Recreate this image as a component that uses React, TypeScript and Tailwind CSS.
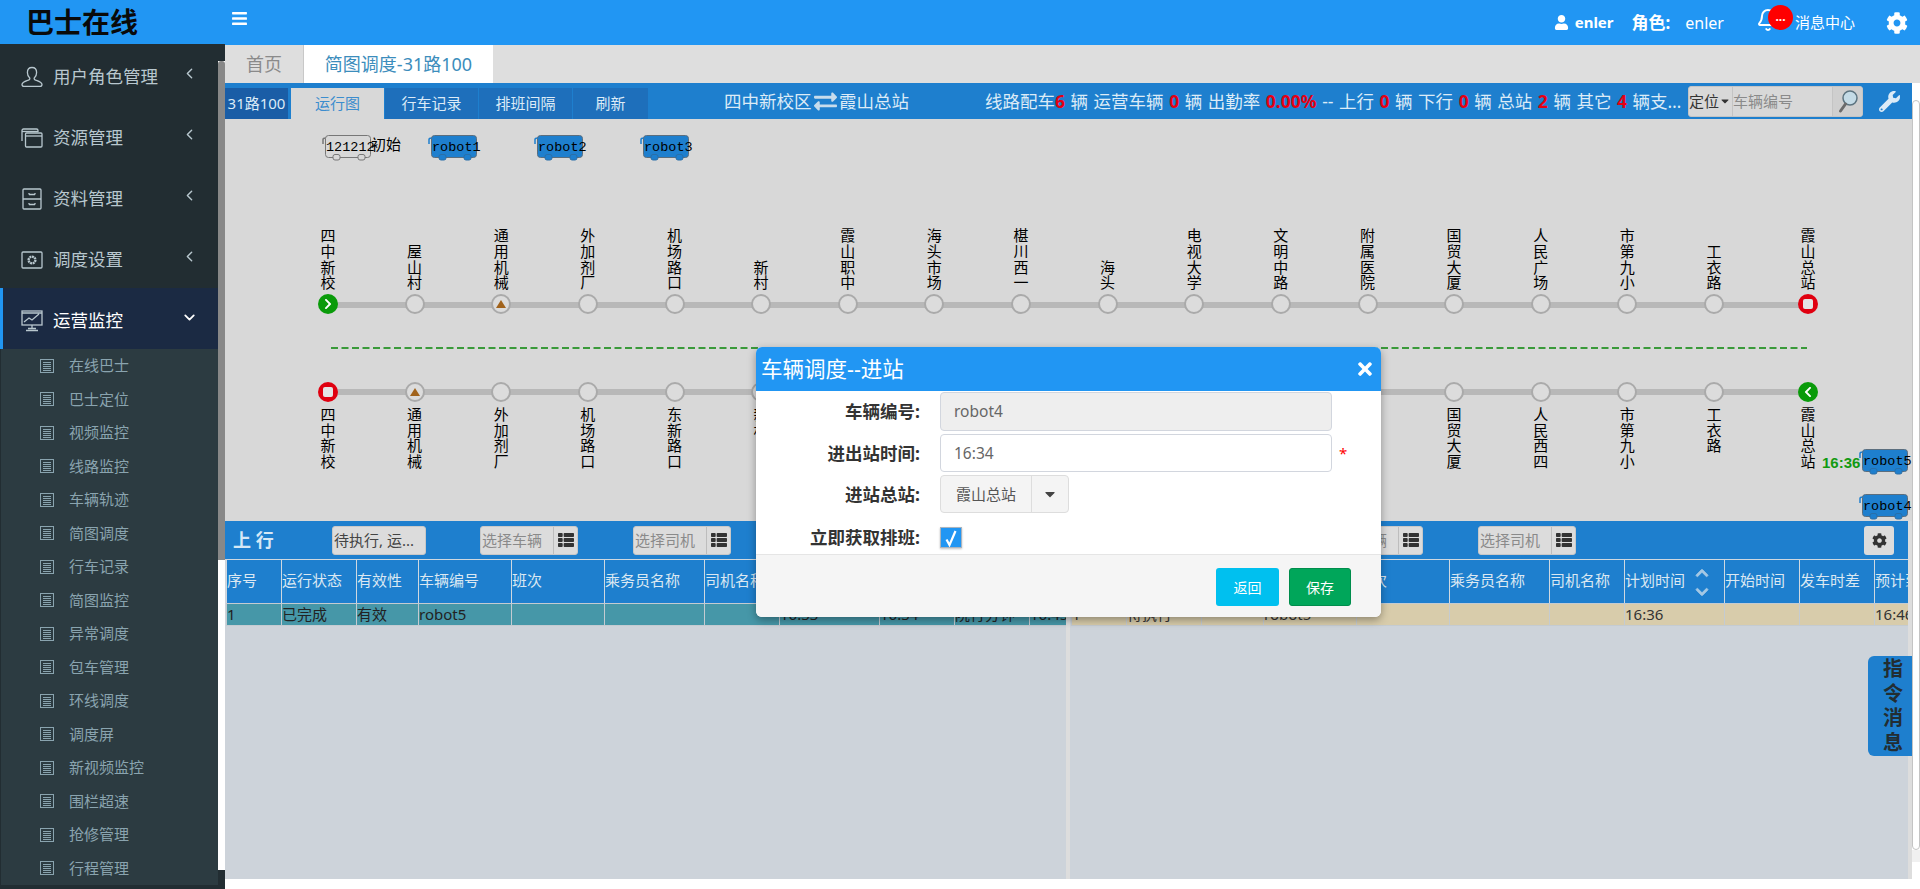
import React from "react";
import {
  FaBars,
  FaCaretDown,
  FaChevronDown,
  FaChevronLeft,
  FaChevronRight,
  FaChevronUp,
  FaCog,
  FaExchangeAlt,
  FaThList,
  FaTimes,
  FaUser,
  FaWrench,
} from "react-icons/fa";
import { Bell, ChevronDown, ChevronLeft } from "lucide-react";

const subMenu = [
  "在线巴士",
  "巴士定位",
  "视频监控",
  "线路监控",
  "车辆轨迹",
  "简图调度",
  "行车记录",
  "简图监控",
  "异常调度",
  "包车管理",
  "环线调度",
  "调度屏",
  "新视频监控",
  "围栏超速",
  "抢修管理",
  "行程管理",
];

const upStations = [
  "四中新校",
  "屋山村",
  "通用机械",
  "外加剂厂",
  "机场路口",
  "新村",
  "霞山职中",
  "海头市场",
  "椹川西一",
  "海头",
  "电视大学",
  "文明中路",
  "附属医院",
  "国贸大厦",
  "人民广场",
  "市第九小",
  "工衣路",
  "霞山总站",
];

// index is the slot on the line, the middle ones sit behind the dialog
const downStations = [
  { name: "四中新校", slot: 0, kind: "stop" },
  { name: "通用机械", slot: 1, kind: "bus" },
  { name: "外加剂厂", slot: 2 },
  { name: "机场路口", slot: 3 },
  { name: "东新路口", slot: 4 },
  { name: "新村", slot: 5 },
  { name: "国贸大厦", slot: 13 },
  { name: "人民西四", slot: 14 },
  { name: "市第九小", slot: 15 },
  { name: "工衣路", slot: 16 },
  { name: "霞山总站", slot: 17, kind: "left" },
];

const columns = ["序号", "运行状态", "有效性", "车辆编号", "班次", "乘务员名称", "司机名称", "计划时间", "开始时间", "发车时差", "预计到达"];

const slotX = (slot: number) => (slot === 17 ? 1583 : 103 + slot * 86.625);

function UserIcon() {
  return (
    <svg width="22" height="22" viewBox="0 0 22 22" fill="none" stroke="currentColor" strokeWidth="1.3">
      <path d="M11 1.5c3 0 4.6 2.3 4.6 5 0 2.4-1 4.4-2.3 5.4-.4.8 0 1.6 1.3 2.2 2.8 1 6.4 2 6.4 4.4 0 1.2-1 1.9-2.2 1.9H3.2C2 20.400 1 19.700 1 18.500c0-2.400 3.600-3.400 6.400-4.400 1.300-.6 1.700-1.400 1.300-2.200C7.400 10.900 6.400 8.900 6.400 6.500c0-2.700 1.600-5 4.600-5z" />
    </svg>
  );
}

function WindowsIcon() {
  return (
    <svg width="22" height="20" viewBox="0 0 22 20" fill="none" stroke="currentColor" strokeWidth="1.3">
      <path d="M1 13V2.500C1 1.700 1.700 1 2.500 1h13c.8 0 1.500.7 1.500 1.500V4" />
      <path d="M1 3.500h16" />
      <rect x="4.500" y="5" width="16.500" height="14" rx="1" />
      <path d="M4.500 8h16.500" />
    </svg>
  );
}

function DrawerIcon() {
  return (
    <svg width="20" height="22" viewBox="0 0 20 22" fill="none" stroke="currentColor" strokeWidth="1.3">
      <rect x="1" y="1" width="18" height="20" rx="1" />
      <path d="M1 11h18M7 6.500h6M7 16.500h6M7 5v1.500M13 5v1.500M7 15v1.500M13 15v1.500" />
    </svg>
  );
}

function PhotoIcon() {
  return (
    <svg width="22" height="18" viewBox="0 0 22 18" fill="none" stroke="currentColor" strokeWidth="1.3">
      <rect x="1" y="1" width="20" height="16" rx="1" />
      <circle cx="11" cy="9" r="3.400" strokeWidth="2.400" strokeDasharray="2 .6" />
    </svg>
  );
}

function MonitorIcon() {
  return (
    <svg width="22" height="22" viewBox="0 0 22 22" fill="none" stroke="currentColor" strokeWidth="1.3">
      <rect x="1" y="1" width="20" height="14" />
      <path d="M3 12l5-4 3 2 7-6M1 3h20" />
      <path d="M11 15v3M5 20.500h12M7 18.500h8" />
    </svg>
  );
}

function ListIcon() {
  return (
    <svg width="14" height="14" viewBox="0 0 14 14" fill="none" stroke="currentColor" strokeWidth="1">
      <rect x=".5" y=".5" width="13" height="13" />
      <path d="M3 3.500h8M3 5.500h8M3 7.500h8M3 9.500h8M3 11.500h8" />
    </svg>
  );
}

function MagnifierIcon() {
  return (
    <svg width="24" height="26" viewBox="0 0 24 26" fill="none">
      <circle cx="14" cy="10" r="7" fill="#c4dbe6" stroke="#5d7480" strokeWidth="1.500" />
      <path d="M9.500 16l-5 7" stroke="#6b6b6b" strokeWidth="3" strokeLinecap="round" />
    </svg>
  );
}

function Bus({ x, y, label, plain }: { x: number; y: number; label: string; plain?: boolean }) {
  const fill = plain ? "#d8d8d8" : "#1e7fce";
  const line = plain ? "#777777" : "#1e7fce";
  return (
    <div className="absolute h-[26px] w-[52px]" style={{ left: x, top: y }}>
      <svg className="absolute left-0 top-0" width="52" height="26" viewBox="0 0 52 26">
        <path d="M1 9V4.500C1 3.500 2 3 4 3" fill="none" stroke={line} strokeWidth="1.500" />
        <rect x="3.500" y=".5" width="45" height="22" rx="3" fill={fill} stroke={plain ? "#777777" : "#5b6e7e"} strokeWidth="1" />
        <rect x="11" y="19.500" width="7" height="5.500" rx="2" fill={fill} stroke={plain ? "#777777" : "#2a6fa8"} />
        <rect x="36" y="19.500" width="7" height="5.500" rx="2" fill={fill} stroke={plain ? "#777777" : "#2a6fa8"} />
      </svg>
      <span className="absolute left-[4px] top-[5px] whitespace-nowrap text-[13.500px] leading-[16px] text-black [font-family:'Liberation_Mono',monospace]">
        {label}
      </span>
    </div>
  );
}

function Dot({ kind }: { kind?: string }) {
  if (kind === "right" || kind === "left") {
    return (
      <div className="flex h-5 w-5 items-center justify-center rounded-full bg-[#0a9b0a] text-white">
        {kind === "right" ? <FaChevronRight size={12} /> : <FaChevronLeft size={12} />}
      </div>
    );
  }
  if (kind === "stop") {
    return (
      <div className="flex h-5 w-5 items-center justify-center rounded-full bg-[#e00010]">
        <div className="h-[10px] w-[10px] rounded-[2px] bg-[#e4e4e4]" />
      </div>
    );
  }
  return (
    <div className="flex h-5 w-5 items-center justify-center rounded-full border-2 border-[#aaaaaa] bg-[#dcdcdc]">
      {kind === "bus" && <div className="h-0 w-0 border-x-[5px] border-b-[8px] border-x-transparent border-b-[#a1631c]" />}
    </div>
  );
}

function Station({ name, x, kind, below }: { name: string; x: number; kind?: string; below?: boolean }) {
  return (
    <div className={`absolute flex w-5 flex-col items-center ${below ? "top-[263px]" : "top-[109px]"}`} style={{ left: x - 10 }}>
      {below && <Dot kind={kind} />}
      <div className={`flex flex-col items-center text-[15px] leading-[15.700px] text-black ${below ? "mt-[5px]" : "mb-[3px] h-[63px] justify-end"}`}>
        {name.split("").map((c, i) => (
          <span key={i}>{c}</span>
        ))}
      </div>
      {!below && <Dot kind={kind} />}
    </div>
  );
}

function PickInput({ label, className }: { label: string; className: string }) {
  return (
    <div className={`flex h-[29px] w-[98px] overflow-hidden rounded-[3px] border border-[#c8c8c8] bg-[#dcdcdc] ${className}`}>
      <div className="flex-1 overflow-hidden whitespace-nowrap pl-[1px] text-[15px] leading-[27px] text-[#8a8a8a]">{label}</div>
      <div className="flex w-[24px] items-center justify-center border-l border-[#bdbdbd] text-[#333333]">
        <FaThList size={16} />
      </div>
    </div>
  );
}

function Panel({ title, rowClass, cells, hasGear, className }: { title: string; rowClass: string; cells: string[]; hasGear?: boolean; className: string }) {
  return (
    <div className={`flex h-full flex-col overflow-hidden ${className}`}>
      <div className="flex h-[38px] shrink-0 items-center bg-[#1e7fce]">
        <div className="ml-[8px] w-[99px] text-[18px] font-bold text-[#d6e8f6]">{title}</div>
        <div className="h-[29px] w-[94px] truncate rounded-[3px] border border-[#c8c8c8] bg-[#dcdcdc] pl-[1px] text-[15px] leading-[27px] text-[#444444]">
          待执行, 运...
        </div>
        <PickInput label="选择车辆" className="ml-[54px]" />
        <PickInput label="选择司机" className="ml-[55px]" />
        {hasGear && (
          <div className="ml-[288px] flex h-[29px] w-[30px] items-center justify-center rounded-[3px] bg-[#dcdcdc] text-[#333333]">
            <FaCog size={15} />
          </div>
        )}
      </div>
      <div className="pl-px">
        <div className="grid w-[1000px] grid-cols-[55px_75px_62px_93px_93px_100px_75px_100px_75px_75px_100px] border-t border-[#cfd8e0] bg-[#1e7fce]">
          {columns.map((c) => (
            <div key={c} className="relative flex h-[43px] items-center overflow-hidden whitespace-nowrap border-l border-[#cfd8e0] pb-[2px] text-[15px] text-[#dbe8f2]">
              {c}
              {c === "计划时间" && (
                <span className="absolute right-[15px] top-[6px] flex flex-col gap-[5px] text-[#a5c8e4]">
                  <FaChevronUp size={14} stroke="currentColor" strokeWidth={30} />
                  <FaChevronDown size={14} stroke="currentColor" strokeWidth={30} />
                </span>
              )}
            </div>
          ))}
        </div>
        <div className={`grid w-[1000px] grid-cols-[55px_75px_62px_93px_93px_100px_75px_100px_75px_75px_100px] border-y border-[#c4cbd1] ${rowClass}`}>
          {cells.map((c, i) => (
            <div key={i} className="h-[21px] overflow-hidden whitespace-nowrap border-l border-[#c4cbd1] text-[15px] leading-[21px]">
              {c}
            </div>
          ))}
        </div>
      </div>
    </div>
  );
}

function FormRow({ label, className, children }: { label: string; className: string; children: React.ReactNode }) {
  return (
    <div className={`flex items-center ${className}`}>
      <div className="w-[164px] whitespace-nowrap text-right text-[17.500px] font-bold text-[#333333]">{label}</div>
      <div className="ml-[20px] flex items-center">{children}</div>
    </div>
  );
}

export default function App() {
  return (
    <div className="relative flex h-[889px] w-[1920px] overflow-hidden bg-white [font-family:'Noto_Sans','Noto_Sans_CJK_SC',sans-serif]">
      {/* Sidebar */}
      <aside className="flex w-[225px] shrink-0 flex-col">
        <div className="flex h-[44px] shrink-0 items-center bg-[#2196f3] pl-[26px] text-[28px] font-bold text-[#0a0a0a]">巴士在线</div>
        <div className="flex min-h-0 flex-1">
          <nav className="w-[218px] overflow-hidden bg-[#222d32]">
            {[
              { label: "用户角色管理", icon: <UserIcon /> },
              { label: "资源管理", icon: <WindowsIcon /> },
              { label: "资料管理", icon: <DrawerIcon /> },
              { label: "调度设置", icon: <PhotoIcon /> },
            ].map((m) => (
              <div key={m.label} className="flex h-[61px] items-center pt-[4px] text-[#b8c7ce]">
                <div className="flex w-[53px] justify-center pl-[18px] pr-[7px]">{m.icon}</div>
                <span className="w-[128px] text-[17.500px]">{m.label}</span>
                <ChevronLeft size={17} strokeWidth={2} className="mb-[6px]" />
              </div>
            ))}
            <div className="flex h-[61px] items-center border-l-[3px] border-[#2196f3] bg-[#1b2a43] pt-[4px] text-white">
              <div className="flex w-[50px] justify-center pl-[15px] pr-[7px] text-[#b8c7ce]">
                <MonitorIcon />
              </div>
              <span className="w-[128px] text-[17.500px]">运营监控</span>
              <ChevronDown size={17} strokeWidth={2.500} className="mb-[6px]" />
            </div>
            <div className="bg-[#2c3b41]">
              {subMenu.map((s) => (
                <div key={s} className="flex h-[33.500px] items-center border-l border-[#222d32] pl-[39px] text-[15px] text-[#8aa4af]">
                  <ListIcon />
                  <span className="mb-px ml-[15px]">{s}</span>
                </div>
              ))}
            </div>
          </nav>
          <div className="flex w-[7px] flex-col">
            <div className="h-[17px] bg-[#222d32]" />
            <div className="h-[499px] rounded-t-[3px] bg-[#888888]" />
            <div className="h-[310px] bg-white" />
            <div className="flex-1 bg-[#222d32]" />
          </div>
        </div>
      </aside>

      {/* Main */}
      <div className="flex min-w-0 flex-1 flex-col">
        <header className="flex h-[45px] shrink-0 items-center bg-[#2196f3] text-white">
          <FaBars size={17} className="ml-[6px] mb-[9px]" />
          <div className="ml-auto flex items-center text-[15px]">
            <FaUser size={15} />
            <span className="ml-[6px] font-bold">enler</span>
            <span className="ml-[18px] text-[17px] font-bold">角色:</span>
            <span className="ml-[15px] text-[16px]">enler</span>
            <div className="relative ml-[32px] flex w-[54px]">
              <Bell size={24} className="-mt-[6px]" />
              <span className="absolute left-[12px] top-[-9px] flex h-[25px] w-[25px] items-center justify-center rounded-full bg-[#ff0000] text-[12px] font-bold">...</span>
            </div>
            <span className="ml-[-15px] text-[15px]">消息中心</span>
            <FaCog size={22} className="ml-[31px] mr-[12px]" />
          </div>
        </header>

        <div className="flex h-[38px] shrink-0 bg-[#dedede] text-[18px]">
          <div className="flex w-[79px] items-center justify-center border-r border-[#c8c8c8] text-[#8a8a8a]">首页</div>
          <div className="flex w-[189px] items-center justify-center bg-white text-[#3c8dbc]">简图调度-31路100</div>
        </div>

        <div className="flex min-h-0 flex-1">
          <div className="flex w-[1687px] shrink-0 flex-col">
            {/* Line toolbar */}
            <div className="flex h-[36px] shrink-0 items-end bg-[#1e7fce] text-white">
              <div className="flex h-[31px] w-[63px] items-center justify-center bg-[#1a5da6] text-[15px] text-[#dcebf7]">31路100</div>
              <div className="ml-[3px] flex h-[31px] w-[93px] items-center justify-center bg-[#d8d8d8] text-[15px] text-[#3c8dce]">运行图</div>
              {["行车记录", "排班间隔"].map((t) => (
                <div key={t} className="ml-px flex h-[31px] w-[93px] items-center justify-center bg-[#1e6fbb] text-[15px] text-[#dcebf7]">
                  {t}
                </div>
              ))}
              <div className="ml-px flex h-[31px] w-[75px] items-center justify-center bg-[#1e6fbb] text-[15px] text-[#dcebf7]">刷新</div>
              <div className="flex h-[36px] items-center whitespace-nowrap text-[17.500px] text-[#dcebf7]">
                <div className="ml-[76px] flex w-[185px] items-center justify-between">
                  四中新校区
                  <FaExchangeAlt size={23} className="text-[#c7dcec]" />
                  霞山总站
                </div>
                <div className="ml-[76px] w-[702px] overflow-hidden text-ellipsis [word-spacing:1px]">
                  线路配车<b className="text-[#e60012]">6</b> 辆 运营车辆 <b className="text-[#e60012]">0</b> 辆 出勤率 <b className="text-[#e60012]">0.00%</b> -- 上行 <b className="text-[#e60012]">0</b> 辆 下行 <b className="text-[#e60012]">0</b> 辆 总站 <b className="text-[#e60012]">2</b> 辆 其它 <b className="text-[#e60012]">4</b> 辆支援 0 辆
                </div>
                <div className="ml-px flex h-[31px] w-[175px] overflow-hidden rounded-[3px] border border-[#c4c4c4] bg-[#d8d8d8] text-[15px]">
                  <div className="flex w-[44px] items-center border-r border-[#c4c4c4] text-[#333333]">
                    定位
                    <FaCaretDown size={12} />
                  </div>
                  <div className="flex w-[99px] items-center text-[#8a8a8a]">车辆编号</div>
                  <div className="flex flex-1 items-center justify-center border-l border-[#c4c4c4] bg-[#cfcfcf]">
                    <MagnifierIcon />
                  </div>
                </div>
                <FaWrench size={21} className="ml-[16px] text-[#dcebf7]" />
              </div>
            </div>

            {/* Route diagram */}
            <div className="relative h-[402px] shrink-0 overflow-hidden bg-[#d8d8d8]">
              <Bus x={97} y={16} label="121212" plain />
              <span className="absolute left-[146px] top-[14px] text-[15px] text-black">初始</span>
              <Bus x={203} y={16} label="robot1" />
              <Bus x={309} y={16} label="robot2" />
              <Bus x={415} y={16} label="robot3" />

              <div className="absolute left-[103px] top-[183px] h-[6px] w-[1480px] bg-[#b8b8b8]" />
              {upStations.map((s, i) => (
                <Station key={s} name={s} x={slotX(i)} kind={i === 0 ? "right" : i === 2 ? "bus" : i === 17 ? "stop" : undefined} />
              ))}

              <svg className="absolute left-[106px] top-[228px]" width="1476" height="2">
                <line x1="0" y1="1" x2="1476" y2="1" stroke="#3a9a3a" strokeWidth="2" strokeDasharray="7 3.500" />
              </svg>

              <div className="absolute left-[103px] top-[270px] h-[6px] w-[1480px] bg-[#b8b8b8]" />
              {downStations.map((s) => (
                <Station key={s.name} name={s.name} x={slotX(s.slot)} kind={s.kind} below />
              ))}

              <span className="absolute left-[1597px] top-[333px] text-[15px] font-bold text-[#129a12] [font-family:'Liberation_Sans',sans-serif]">16:36</span>
              <Bus x={1634} y={330} label="robot5" />
              <Bus x={1634} y={375} label="robot4" />
            </div>

            {/* Up / down tables */}
            <div className="flex h-[358px] shrink-0 bg-[#cdd3da]">
              <Panel
                title="上 行"
                className="w-[841px] shrink-0"
                rowClass="bg-[#4697a8] text-[#222222]"
                cells={["1", "已完成", "有效", "robot5", "", "", "", "16:33", "16:34", "院行分钟", "16:45"]}
              />
              <div className="w-[4px] shrink-0 bg-[#dddddd]" />
              <Panel
                title="下 行"
                className="w-[838px] shrink-0"
                hasGear
                rowClass="bg-[#d8ccab] text-[#333333]"
                cells={["1", "待执行", "", "robot5", "", "", "", "16:36", "", "", "16:46"]}
              />
              <div className="w-[4px] shrink-0 bg-[#dddddd]" />
            </div>
          </div>

          {/* Page scrollbar */}
          <div className="flex w-[8px] flex-col bg-white pt-[17px]">
            <div className="h-[750px] rounded-[4px] border border-[#c4c4c4] bg-white" />
            <div className="h-[12px] bg-[#f0f0f0]" />
          </div>
        </div>
      </div>

      {/* Side tab */}
      <div className="absolute left-[1868px] top-[656px] flex h-[100px] w-[44px] flex-col items-center justify-center rounded-l-md bg-[#1e7fce] pl-[6px] text-[20px] font-bold leading-[24.500px] text-[#222d32]">
        {"指令消息".split("").map((c) => (
          <span key={c}>{c}</span>
        ))}
      </div>

      {/* Dialog */}
      <div className="absolute left-[756px] top-[347px] flex h-[270px] w-[625px] flex-col overflow-hidden rounded-[6px] bg-white shadow-[0_3px_9px_rgba(0,0,0,0.35)]">
        <div className="flex h-[44px] shrink-0 items-center justify-between bg-[#2196f3] px-[5px] text-white">
          <span className="text-[21.500px]">车辆调度--进站</span>
          <FaTimes size={20} className="mr-[1px]" />
        </div>
        <div className="h-[163px] shrink-0 pt-[1px]">
          <FormRow label="车辆编号:" className="h-[39px]">
            <div className="h-[39px] w-[392px] rounded-[4px] border border-[#d2d6de] bg-[#eeeeee] pl-[13px] text-[15.500px] leading-[36px] text-[#666666]">robot4</div>
          </FormRow>
          <FormRow label="进出站时间:" className="mt-[3px] h-[38px]">
            <div className="h-[38px] w-[392px] rounded-[4px] border border-[#d2d6de] bg-white pl-[13px] text-[15.500px] leading-[36px] text-[#666666]">16:34</div>
            <span className="ml-[7px] text-[15px] text-[#ff0000]">*</span>
          </FormRow>
          <FormRow label="进站总站:" className="mt-[3px] h-[38px]">
            <div className="flex h-[38px] w-[129px] overflow-hidden rounded-[4px] border border-[#dddddd] bg-[#f4f4f4] text-[15px] text-[#555555]">
              <div className="flex w-[91px] items-center justify-center border-r border-[#dddddd]">霞山总站</div>
              <div className="flex flex-1 items-center justify-center text-[#444444]">
                <FaCaretDown size={16} />
              </div>
            </div>
          </FormRow>
          <FormRow label="立即获取排班:" className="mt-[14px] h-[21px]">
            <div className="flex h-[21px] w-[22px] items-center justify-center border border-[#a9b4bf] bg-[#2196f3] shadow-[0_1px_2px_rgba(0,0,0,0.25)]">
              <svg width="14" height="18" viewBox="0 0 14 18" fill="none" stroke="white" strokeWidth="2.200">
                <path d="M2.500 10.500L5.500 16L11.500 2" />
              </svg>
            </div>
          </FormRow>
        </div>
        <div className="flex flex-1 items-start justify-end gap-[10px] border-t border-[#e5e5e5] bg-[#f5f5f5] pr-[30px] pt-[13px]">
          <div className="flex h-[38px] w-[63px] items-center justify-center rounded-[3px] bg-[#00c0ef] text-[14px] text-white">返回</div>
          <div className="flex h-[38px] w-[62px] items-center justify-center rounded-[3px] border border-[#008d4c] bg-[#00a65a] text-[14px] text-white">保存</div>
        </div>
      </div>
    </div>
  );
}
